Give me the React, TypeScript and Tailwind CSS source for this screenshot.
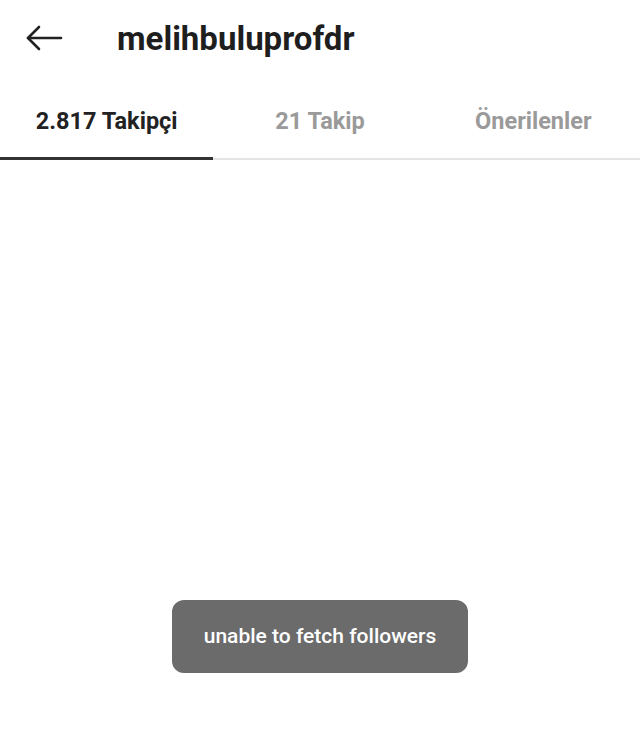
import React from "react";

const tabs = [
  { label: "2.817 Takipçi", active: true },
  { label: "21 Takip", active: false },
  { label: "Önerilenler", active: false },
];

export default function App() {
  return (
    <div className="relative w-[640px] h-[748px] bg-white overflow-hidden font-['Roboto',sans-serif]">
      {/* header */}
      <div className="flex items-center h-[76px] pl-[24px]">
        <svg width="40" height="28" viewBox="0 0 40 28" fill="none" stroke="#222" strokeWidth="2.6" strokeLinecap="round" strokeLinejoin="round">
          <path d="M37 14H4" />
          <path d="M15 3L4 14l11 11" />
        </svg>
        <h1 className="ml-[53px] text-[33px] leading-none font-bold text-[#1e1e1e]">melihbuluprofdr</h1>
      </div>

      {/* tabs */}
      <div className="flex border-b-2 border-[#e4e4e4] mt-[6px]">
        {tabs.map((t) => (
          <div key={t.label} className="relative flex-1 h-[76px] pt-[4px] flex items-center justify-center">
            <span className={t.active ? "text-[23.5px] font-bold text-[#222]" : "text-[23.5px] font-bold text-[#9a9a9a]"}>
              {t.label}
            </span>
            {t.active && <div className="absolute left-0 right-0 -bottom-[2px] h-[3px] bg-[#333]" />}
          </div>
        ))}
      </div>

      {/* toast */}
      <div className="absolute left-[172px] top-[600px] w-[296px] h-[73px] rounded-[12px] bg-[#6b6b6b] flex items-center justify-center">
        <span className="text-white text-[21px] font-medium">unable to fetch followers</span>
      </div>
    </div>
  );
}
